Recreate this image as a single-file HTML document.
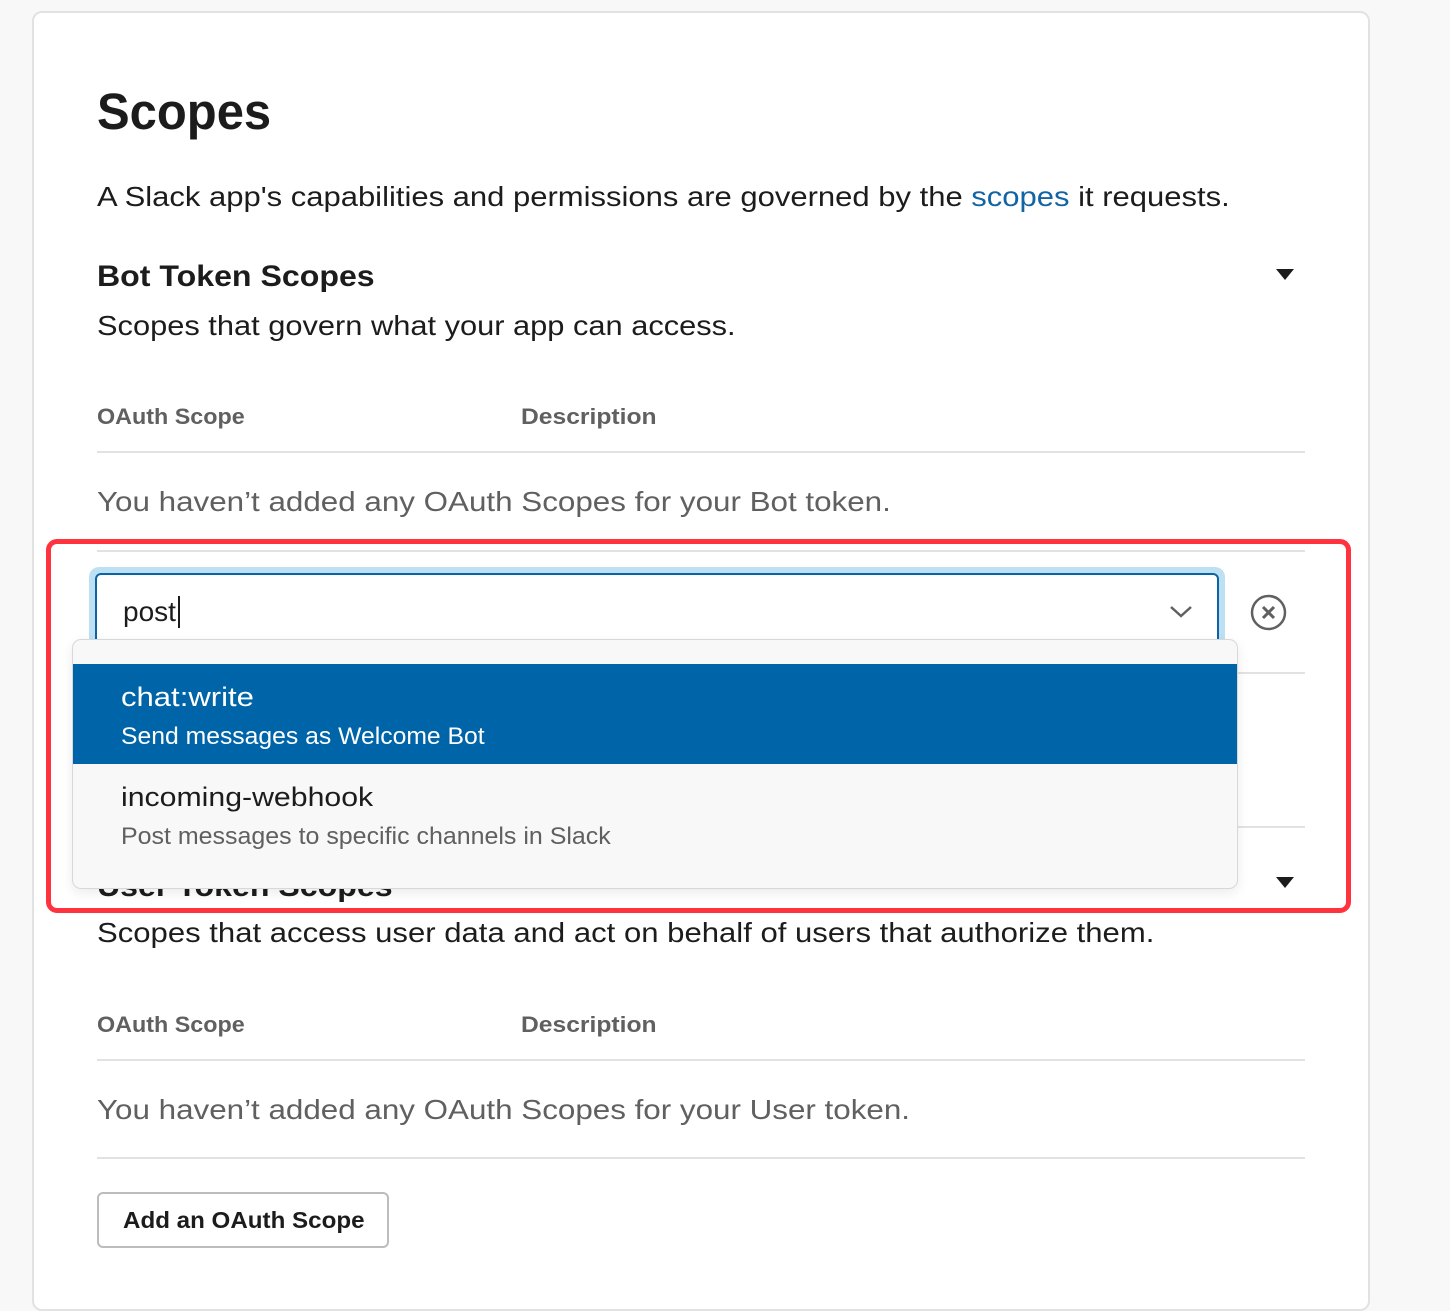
<!DOCTYPE html>
<html><head><meta charset="utf-8"><style>
*{margin:0;padding:0;box-sizing:border-box}
body{width:1450px;height:1290px;background:#f8f8f8;position:relative;overflow:hidden;font-family:"Liberation Sans",sans-serif;color:#1d1c1d}
.card{position:absolute;left:32px;top:11px;width:1338px;height:1300px;background:#fff;border:2px solid #e2e2e2;border-radius:10px}
.t{position:absolute;line-height:1;white-space:nowrap;transform-origin:0 50%}
.hr{position:absolute;left:97px;width:1208px;height:2px;background:#e2e2e2}
.tri{position:absolute;width:0;height:0;border-left:9px solid transparent;border-right:9px solid transparent;border-top:11px solid #1d1c1d}
</style></head><body>
<div class="card"></div>
<div class="t" style="left:97px;top:86px;font-size:51px;font-weight:bold;transform:scaleX(0.96)">Scopes</div>
<div class="t" style="left:97px;top:183px;font-size:28px;transform:scaleX(1.107)">A Slack app's capabilities and permissions are governed by the <span style="color:#1264a3">scopes</span> it requests.</div>
<div class="t" style="left:97px;top:262px;font-size:30px;font-weight:bold;transform:scaleX(1.07)">Bot Token Scopes</div>
<div class="tri" style="left:1276px;top:269px"></div>
<div class="t" style="left:97px;top:312px;font-size:28px;transform:scaleX(1.10)">Scopes that govern what your app can access.</div>
<div class="t" style="left:97px;top:406px;font-size:22px;font-weight:bold;color:#616061;transform:scaleX(1.06)">OAuth Scope</div>
<div class="t" style="left:521px;top:406px;font-size:22px;font-weight:bold;color:#616061;transform:scaleX(1.12)">Description</div>
<div class="hr" style="top:451px"></div>
<div class="t" style="left:97px;top:488px;font-size:28px;color:#616061;transform:scaleX(1.12)">You haven’t added any OAuth Scopes for your Bot token.</div>
<div class="hr" style="top:550px"></div>
<div class="hr" style="top:672px"></div>
<div class="hr" style="top:826px"></div>

<div class="t" style="left:97px;top:872px;font-size:30px;font-weight:bold;transform:scaleX(1.07)">User Token Scopes</div>
<div class="tri" style="left:1276px;top:877px"></div>

<div style="position:absolute;left:89px;top:567px;width:1136px;height:90px;background:#bde0f3;border-radius:10px"></div>
<div style="position:absolute;left:95px;top:573px;width:1124px;height:84px;background:#fff;border:2px solid #0b63a8;border-radius:6px"></div>
<div class="t" style="left:123px;top:596px;font-size:28px">post<span style="display:inline-block;width:2px;height:32px;background:#1d1c1d;vertical-align:-7px;margin-left:2px"></span></div>
<svg style="position:absolute;left:1168px;top:604px" width="26" height="16" viewBox="0 0 26 16"><path d="M3 3 L13 12 L23 3" fill="none" stroke="#616061" stroke-width="2.5"/></svg>
<svg style="position:absolute;left:1249px;top:593px" width="40" height="40" viewBox="0 0 40 40"><circle cx="19.5" cy="19.5" r="16.5" fill="none" stroke="#616061" stroke-width="2.5"/><path d="M14 14 L25 25 M25 14 L14 25" stroke="#616061" stroke-width="3"/></svg>

<div style="position:absolute;left:72px;top:639px;width:1166px;height:250px;background:#f8f8f8;border:1.5px solid #d8d8d8;border-radius:9px;box-shadow:0 4px 12px rgba(0,0,0,0.08);overflow:hidden">
<div style="position:absolute;left:0;top:24px;width:100%;height:100px;background:#0064a8"></div>
</div>
<div class="t" style="left:121px;top:684px;font-size:27px;color:#fff;transform:scaleX(1.15)">chat:write</div>
<div class="t" style="left:121px;top:725px;font-size:24px;color:#fff;transform:scaleX(1.03)">Send messages as Welcome Bot</div>
<div class="t" style="left:121px;top:784px;font-size:27px;transform:scaleX(1.12)">incoming-webhook</div>
<div class="t" style="left:121px;top:825px;font-size:24px;color:#616061;transform:scaleX(1.04)">Post messages to specific channels in Slack</div>

<div style="position:absolute;left:46px;top:539px;width:1305px;height:374px;border:5px solid #ff333d;border-radius:11px"></div>

<div class="t" style="left:97px;top:919px;font-size:28px;transform:scaleX(1.11)">Scopes that access user data and act on behalf of users that authorize them.</div>
<div class="t" style="left:97px;top:1014px;font-size:22px;font-weight:bold;color:#616061;transform:scaleX(1.06)">OAuth Scope</div>
<div class="t" style="left:521px;top:1014px;font-size:22px;font-weight:bold;color:#616061;transform:scaleX(1.12)">Description</div>
<div class="hr" style="top:1059px"></div>
<div class="t" style="left:97px;top:1096px;font-size:28px;color:#616061;transform:scaleX(1.12)">You haven’t added any OAuth Scopes for your User token.</div>
<div class="hr" style="top:1157px"></div>
<div style="position:absolute;left:97px;top:1192px;width:292px;height:56px;border:2px solid #bcbcbc;border-radius:6px;background:#fff"></div>
<div class="t" style="left:123px;top:1209px;font-size:23px;font-weight:bold;transform:scaleX(1.05)">Add an OAuth Scope</div>
</body></html>
